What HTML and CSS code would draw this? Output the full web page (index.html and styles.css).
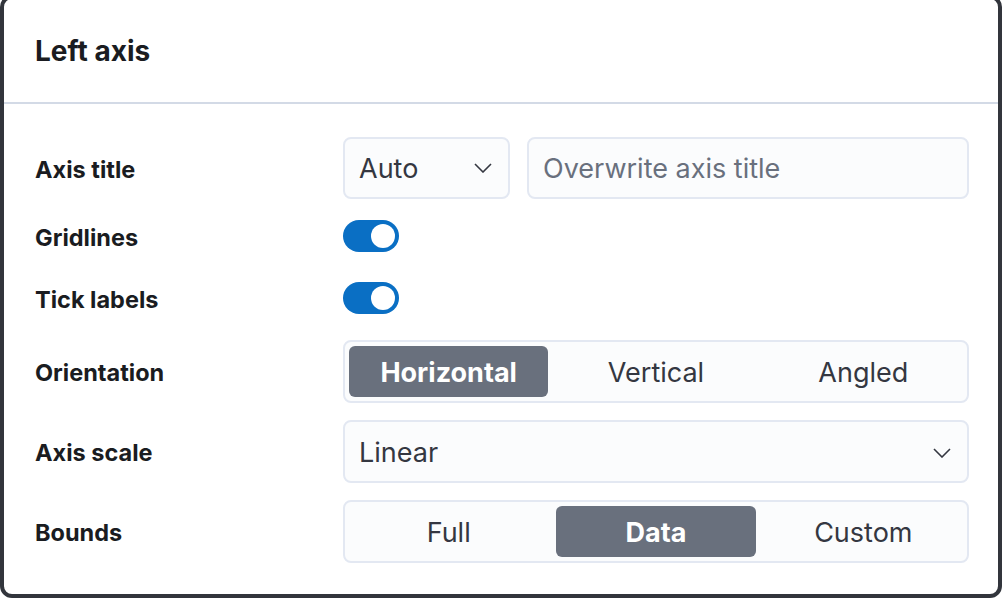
FILE: index.html
```html
<!DOCTYPE html>
<html>
<head>
<meta charset="utf-8">
<link rel="stylesheet" href="styles.css">
</head>
<body>
<div class="panel">
  <div class="header"><h2 class="title">Left axis</h2></div>
  <div class="body">
    <div class="row row-first">
      <div class="label">Axis title</div>
      <div class="control control-split">
        <div class="field select select-small">
          <span class="value">Auto</span>
          <svg class="chev" width="18" height="10" viewBox="0 0 18 10"><path d="M1 1 L9 9 L17 1" fill="none" stroke="#343741" stroke-width="1.6"/></svg>
        </div>
        <div class="field input"><span class="placeholder">Overwrite axis title</span></div>
      </div>
    </div>
    <div class="row row-toggle row-grid">
      <div class="label">Gridlines</div>
      <div class="control"><span class="toggle"><span class="knob"></span></span></div>
    </div>
    <div class="row row-toggle row-tick">
      <div class="label">Tick labels</div>
      <div class="control"><span class="toggle"><span class="knob"></span></span></div>
    </div>
    <div class="row row-orient">
      <div class="label">Orientation</div>
      <div class="control">
        <div class="group">
          <span class="seg seg-on">Horizontal</span>
          <span class="seg">Vertical</span>
          <span class="seg">Angled</span>
        </div>
      </div>
    </div>
    <div class="row">
      <div class="label">Axis scale</div>
      <div class="control">
        <div class="field select select-wide">
          <span class="value">Linear</span>
          <svg class="chev" width="18" height="10" viewBox="0 0 18 10"><path d="M1 1 L9 9 L17 1" fill="none" stroke="#343741" stroke-width="1.6"/></svg>
        </div>
      </div>
    </div>
    <div class="row">
      <div class="label">Bounds</div>
      <div class="control">
        <div class="group">
          <span class="seg">Full</span>
          <span class="seg seg-on">Data</span>
          <span class="seg">Custom</span>
        </div>
      </div>
    </div>
  </div>
</div>
</body>
</html>
```

FILE: styles.css
```css
html, body {
  margin: 0;
  padding: 0;
  background: #ffffff;
  overflow: hidden;
}
body {
  font-family: Inter, "Noto Sans", "Liberation Sans", sans-serif;
  color: #343741;
}
.panel {
  box-sizing: border-box;
  width: 1002px;
  height: 603px;
  margin-top: -5px;
  border: 4px solid #32353c;
  border-radius: 12px;
  background: #ffffff;
}
.header {
  height: 103px;
  border-bottom: 2px solid #d3dae6;
  display: flex;
  align-items: center;
  padding-left: 31px;
}
.title {
  margin: 0;
  font-size: 28px;
  font-weight: 700;
  color: #1a1c21;
}
.body {
  padding: 33px 29px 0 31px;
  display: flex;
  flex-direction: column;
}
.row {
  display: flex;
  align-items: center;
  margin-top: 17px;
}
.row-first { margin-top: 0; }
.row-toggle { height: 40px; }
.row-grid { margin-top: 17px; }
.row-tick { margin-top: 22px; }
.row-orient { margin-top: 22px; }
.label {
  width: 308px;
  flex: none;
  font-size: 23.5px;
  font-weight: 700;
  color: #1a1c21;
  padding-top: 2px;
}
.control {
  flex: 1;
  display: flex;
  align-items: center;
}
.control-split { gap: 17px; }
.field {
  box-sizing: border-box;
  height: 62px;
  border: 2px solid #e3e8f2;
  border-radius: 8px;
  background: #fbfcfd;
  display: flex;
  align-items: center;
  font-size: 27px;
}
.select {
  justify-content: space-between;
  padding: 0 16px 0 14px;
}
.select-small { width: 167px; flex: none; }
.select-wide { flex: 1; height: 63px; padding-top: 2px; }
.input { flex: 1; padding-left: 14px; }
.placeholder { color: #69707d; }
.value { color: #343741; }
.chev { display: block; }
.toggle {
  width: 56px;
  height: 32px;
  border-radius: 16px;
  background: #0a6fc4;
  display: flex;
  align-items: center;
  justify-content: flex-end;
  padding-right: 4px;
  box-sizing: border-box;
}
.knob {
  width: 24px;
  height: 24px;
  border-radius: 50%;
  background: #ffffff;
}
.group {
  box-sizing: border-box;
  flex: 1;
  height: 63px;
  border: 2px solid #e3e8f2;
  border-radius: 8px;
  background: #fbfcfd;
  padding: 4px;
  display: flex;
  gap: 8px;
}
.seg {
  flex: 1;
  display: flex;
  align-items: center;
  justify-content: center;
  border-radius: 6px;
  font-size: 27px;
  color: #343741;
  padding-top: 2px;
}
.seg-on {
  background: #69707d;
  color: #ffffff;
  font-weight: 700;
}
```
